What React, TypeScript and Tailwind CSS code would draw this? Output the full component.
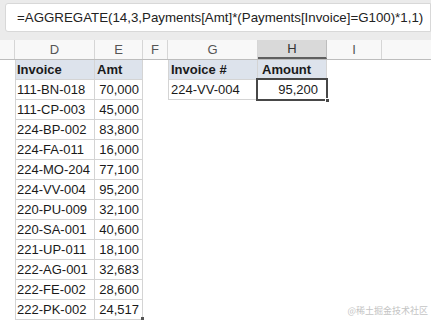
const font = { fontFamily: '"Liberation Sans", Arial, sans-serif' };

const rows: [string, string][] = [
  ["111-BN-018", "70,000"],
  ["111-CP-003", "45,000"],
  ["224-BP-002", "83,800"],
  ["224-FA-011", "16,000"],
  ["224-MO-204", "77,100"],
  ["224-VV-004", "95,200"],
  ["220-PU-009", "32,100"],
  ["220-SA-001", "40,600"],
  ["221-UP-011", "18,100"],
  ["222-AG-001", "32,683"],
  ["222-FE-002", "28,600"],
  ["222-PK-002", "24,517"],
];

const App = () => {
  return (
    <div
      className="relative w-[431px] h-[326px] overflow-hidden bg-white text-[13px] text-[#1a1a1a]"
      style={font}
    >
      {/* formula bar */}
      <div className="h-[40px] bg-[#ebebeb] pt-[3px] pl-[5px] pb-[8px]">
        <div className="h-[29px] bg-white border border-[#d8d8d8] rounded-l-[3px] flex items-center pl-[11px] text-[13.3px] text-[#222] whitespace-nowrap">
          =AGGREGATE(14,3,Payments[Amt]*(Payments[Invoice]=G100)*1,1)
        </div>
      </div>

      {/* column headers */}
      <div className="flex h-[20px] bg-[#f8f8f8] border-b border-[#bdbdbd] text-[#555] text-[13px]">
        <div className="w-[15px] border-r border-[#d6d6d6]" />
        <div className="w-[80px] border-r border-[#d6d6d6] flex items-center justify-center">D</div>
        <div className="w-[48px] border-r border-[#d6d6d6] flex items-center justify-center">E</div>
        <div className="w-[25px] border-r border-[#d6d6d6] flex items-center justify-center">F</div>
        <div className="w-[90px] border-r border-[#d6d6d6] flex items-center justify-center">G</div>
        <div className="w-[69px] border-r border-[#bdbdbd] border-b-2 border-b-[#5f5f5f] bg-[#d9d9d9] flex items-center justify-center text-[#333]">
          H
        </div>
        <div className="w-[55px] border-r border-[#d6d6d6] flex items-center justify-center">I</div>
        <div className="flex-1" />
      </div>

      {/* grid body */}
      <div className="flex">
        <div className="w-[15px]" />

        {/* Payments table */}
        <div className="flex flex-col border-l border-[#d4d4d4]">
          <div className="flex h-[20px] bg-[#dde3ec] font-bold border-b border-[#d4d4d4]">
            <div className="w-[79px] border-r border-[#d4d4d4] pl-[1px] flex items-center">Invoice</div>
            <div className="w-[48px] border-r border-[#d4d4d4] pl-[2px] flex items-center">Amt</div>
          </div>
          {rows.map(([inv, amt], i) => (
            <div key={inv} className="flex h-[20px] border-b border-[#d4d4d4]">
              <div className="w-[79px] border-r border-[#d4d4d4] pl-[1px] flex items-center">{inv}</div>
              <div className="relative w-[48px] border-r border-[#d4d4d4] pr-[3px] flex items-center justify-end">
                {amt}
                {i === rows.length - 1 && (
                  <div className="absolute right-[-2px] bottom-[-1px] w-[3px] h-[3px] bg-[#555]" />
                )}
              </div>
            </div>
          ))}
        </div>

        <div className="w-[25px]" />

        {/* lookup table */}
        <div className="flex flex-col border-l border-[#d4d4d4] self-start">
          <div className="flex h-[20px] bg-[#dde3ec] font-bold border-b border-[#d4d4d4]">
            <div className="w-[89px] border-r border-[#d4d4d4] pl-[2px] flex items-center">Invoice #</div>
            <div className="w-[69px] border-r border-[#d4d4d4] pl-[4px] flex items-center">Amount</div>
          </div>
          <div className="flex h-[20px] border-b border-[#d4d4d4]">
            <div className="w-[89px] border-r border-[#d4d4d4] pl-[2px] flex items-center">224-VV-004</div>
            <div className="relative w-[69px] flex items-center justify-end pr-[9px]">
              95,200
              <div className="absolute left-[-2px] top-[-2px] right-[-1px] bottom-[-2px] border-2 border-[#474747]" />
              <div className="absolute right-[-3px] bottom-[-4px] w-[5px] h-[5px] bg-[#474747] border border-white" />
            </div>
          </div>
        </div>
      </div>

      {/* watermark */}
      <div
        className="absolute right-[3px] bottom-[9px] text-[9px] text-[#c4c4c4]"
        style={{ fontFamily: '"Noto Sans CJK SC", sans-serif' }}
      >
        @稀土掘金技术社区
      </div>
    </div>
  );
};

export default App;
